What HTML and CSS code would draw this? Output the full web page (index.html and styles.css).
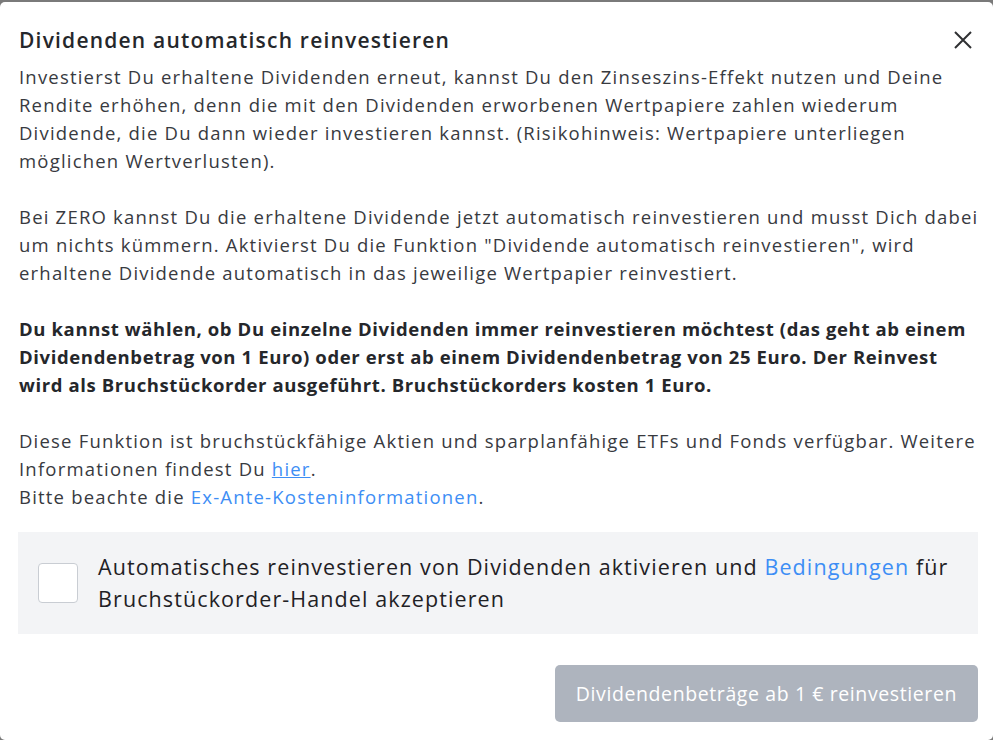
FILE: index.html
```html
<!DOCTYPE html>
<html lang="de">
<head>
<meta charset="utf-8">
<link rel="stylesheet" href="styles.css">
</head>
<body>
<div class="modal">
  <div class="header">
    <h1 class="title">Dividenden automatisch reinvestieren</h1>
    <button class="close" aria-label="Schließen">
      <svg width="20" height="20" viewBox="0 0 20 20"><path d="M2 2 L18 18 M18 2 L2 18" stroke="#2f3033" stroke-width="2" fill="none"/></svg>
    </button>
  </div>
  <div class="content">
    <p>Investierst Du erhaltene Dividenden erneut, kannst Du den Zinseszins-Effekt nutzen und Deine Rendite erhöhen, denn die mit den Dividenden erworbenen Wertpapiere zahlen wiederum Dividende, die Du dann wieder investieren kannst. (Risikohinweis: Wertpapiere unterliegen möglichen Wertverlusten).</p>
    <p>Bei ZERO kannst Du die erhaltene Dividende jetzt automatisch reinvestieren und musst Dich dabei um nichts kümmern. Aktivierst Du die Funktion "Dividende automatisch reinvestieren", wird erhaltene Dividende automatisch in das jeweilige Wertpapier reinvestiert.</p>
    <p class="bold">Du kannst wählen, ob Du einzelne Dividenden immer reinvestieren möchtest (das geht ab einem Dividendenbetrag von 1 Euro) oder erst ab einem Dividendenbetrag von 25 Euro. Der Reinvest wird als Bruchstückorder ausgeführt. Bruchstückorders kosten 1 Euro.</p>
    <p>Diese Funktion ist bruchstückfähige Aktien und sparplanfähige ETFs und Fonds verfügbar. Weitere Informationen findest Du <a class="ul" href="#">hier</a>.<br>Bitte beachte die <a href="#">Ex-Ante-Kosteninformationen</a>.</p>
  </div>
  <label class="consent">
    <span class="box"></span>
    <span class="consent-text">Automatisches reinvestieren von Dividenden aktivieren und <a href="#">Bedingungen</a> für Bruchstückorder-Handel akzeptieren</span>
  </label>
  <div class="footer">
    <button class="primary" disabled>Dividendenbeträge ab 1 € reinvestieren</button>
  </div>
</div>
</body>
</html>
```

FILE: styles.css
```css
html, body {
  margin: 0;
  padding: 0;
  height: 100%;
}
body {
  background: #7a7a7a;
  font-family: "Open Sans", "Noto Sans", sans-serif;
  overflow: hidden;
}
.modal {
  margin-top: 2px;
  background: #fff;
  border-radius: 5px;
  height: 738px;
  box-sizing: border-box;
  padding: 23px 15px 0 18px;
}
.header {
  display: flex;
  justify-content: space-between;
  align-items: center;
  height: 29px;
}
.title {
  margin: 0 0 0 1px;
  font-size: 21px;
  font-weight: 600;
  color: #25272b;
  letter-spacing: 1.2px;
  line-height: 28px;
}
.close {
  border: 0;
  background: none;
  padding: 0;
  margin-right: 5px;
  width: 20px;
  height: 20px;
  display: flex;
}
.content {
  padding-left: 1px;
  padding-top: 9px;
  margin-right: -4px;
  font-size: 18.5px;
  line-height: 28px;
  letter-spacing: 1.2px;
  color: #383a3f;
}
.content p {
  margin: 0 0 28px;
}
.content p:last-child {
  margin-bottom: 21px;
}
.content p.bold {
  font-weight: 700;
  color: #25272b;
  letter-spacing: 0.62px;
}
a {
  color: #3d8ef5;
  text-decoration: none;
}
a.ul {
  text-decoration: underline;
}
.consent {
  display: flex;
  align-items: center;
  gap: 20px;
  background: #f3f4f6;
  padding: 19px 20px;
  height: 102px;
  box-sizing: border-box;
}
.box {
  flex: none;
  width: 38px;
  height: 38px;
  border: 1px solid #c9cdd3;
  border-radius: 4px;
  background: #fff;
}
.consent-text {
  font-size: 21.5px;
  line-height: 32px;
  letter-spacing: 1.1px;
  color: #1f2125;
}
.footer {
  display: flex;
  justify-content: flex-end;
  margin-top: 31px;
}
.primary {
  border: 0;
  border-radius: 5px;
  background: #aeb4be;
  color: #fff;
  font-family: inherit;
  font-size: 19.5px;
  letter-spacing: 0.6px;
  height: 57px;
  padding: 0 21px;
}
```
